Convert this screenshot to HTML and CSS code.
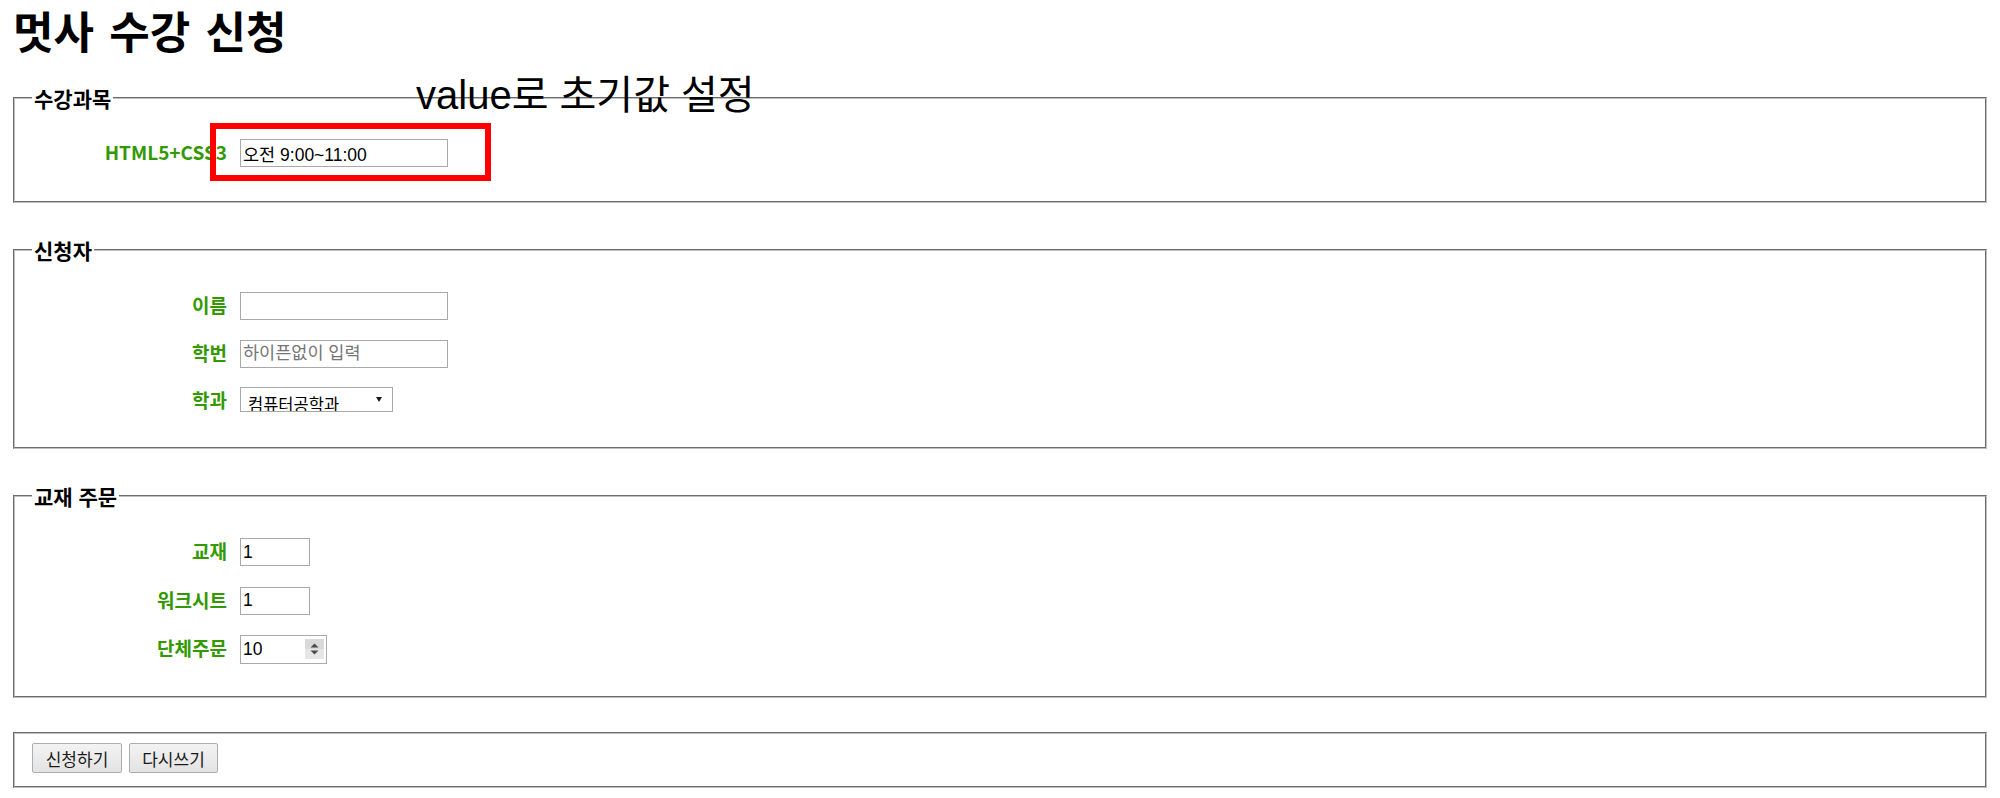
FILE: index.html
```html
<!DOCTYPE html>
<html lang="ko">
<head>
<meta charset="utf-8">
<title>멋사 수강 신청</title>
<link rel="stylesheet" href="styles.css">
</head>
<body>
<h1 class="title">멋사 수강 신청</h1>
<form class="apply">
  <fieldset class="group group-course">
    <legend class="group-legend">수강과목</legend>
    <div class="row">
      <label class="row-label" for="course">HTML5+CSS3</label>
      <input class="field field-wide" id="course" type="text" value="오전 9:00~11:00">
    </div>
  </fieldset>

  <fieldset class="group group-person">
    <legend class="group-legend">신청자</legend>
    <div class="row">
      <label class="row-label" for="name">이름</label>
      <input class="field field-wide" id="name" type="text">
    </div>
    <div class="row">
      <label class="row-label" for="sid">학번</label>
      <input class="field field-wide" id="sid" type="text" placeholder="하이픈없이 입력">
    </div>
    <div class="row">
      <label class="row-label" for="major">학과</label>
      <span class="select-wrap">
        <select class="select" id="major">
          <option>컴퓨터공학과</option>
          <option>정보통신학과</option>
          <option>전자공학과</option>
        </select>
      </span>
    </div>
  </fieldset>

  <fieldset class="group group-book">
    <legend class="group-legend">교재 주문</legend>
    <div class="row">
      <label class="row-label" for="book">교재</label>
      <input class="field field-num" id="book" type="number" value="1">
    </div>
    <div class="row">
      <label class="row-label" for="sheet">워크시트</label>
      <input class="field field-num" id="sheet" type="number" value="1">
    </div>
    <div class="row">
      <label class="row-label" for="group">단체주문</label>
      <span class="spin-wrap">
        <input class="field field-spin" id="group" type="number" value="10">
        <span class="spin" aria-hidden="true">
          <svg width="19" height="20" viewBox="0 0 19 20">
            <rect x="0" y="0" width="19" height="20" fill="#e6e6e6"/>
            <rect x="0" y="0" width="19" height="10" fill="#d9d9d9"/>
            <path d="M5.5 8.5 L9.5 4.5 L13.5 8.5 Z" fill="#4a4a4a"/>
            <path d="M5.5 11.5 L9.5 15.5 L13.5 11.5 Z" fill="#4a4a4a"/>
          </svg>
        </span>
      </span>
    </div>
  </fieldset>

  <fieldset class="group group-actions">
    <input class="btn" type="submit" value="신청하기">
    <input class="btn" type="reset" value="다시쓰기">
  </fieldset>
</form>

<div class="callout-box"></div>
<p class="callout-text">value로 초기값 설정</p>
</body>
</html>
```

FILE: styles.css
```css
html, body {
  margin: 0;
  background: #ffffff;
}

body {
  position: relative;
  padding-top: 6px;
  font-family: "Noto Sans CJK KR", sans-serif;
  color: #000000;
}

.title {
  margin: 0 0 31px 13px;
  font-size: 44px;
  line-height: 48px;
  font-weight: 700;
  word-spacing: 3px;
}

.apply {
  margin: 0;
}

.group {
  margin: 0 13px;
  border: 2px groove #c0c0c0;
  padding: 0 17px;
  min-width: 0;
}

.group + .group {
  margin-top: 34px;
}

.group-legend {
  padding: 0 2px;
  font-size: 21px;
  line-height: 26px;
  font-weight: 700;
  font-family: "Noto Sans CJK KR", sans-serif;
}

.group-course {
  padding-top: 28px;
  padding-bottom: 34px;
}

.group-person {
  padding-top: 29px;
  padding-bottom: 34px;
}

.group-person .row + .row {
  margin-top: 19.5px;
}

.group-book {
  padding-top: 29px;
  padding-bottom: 32px;
}

.group-book .row + .row {
  margin-top: 20.5px;
}

.group-actions {
  padding-top: 9px;
  padding-bottom: 13px;
  display: flex;
  gap: 7px;
}

.row {
  display: flex;
  align-items: flex-start;
}

.row-label {
  width: 195px;
  flex: none;
  text-align: right;
  margin-right: 13px;
  font-family: "Noto Sans CJK KR", sans-serif;
  font-size: 19px;
  line-height: 26px;
  font-weight: 700;
  color: #339900;
}

.field {
  box-sizing: border-box;
  height: 28px;
  margin: 0;
  border: 1px solid #a9a9a9;
  border-radius: 0;
  padding: 0 2px;
  background: #ffffff;
  font-family: "Liberation Sans", "Noto Sans CJK KR", sans-serif;
  font-size: 17.5px;
  color: #000000;
  outline: none;
}

.field::placeholder {
  color: #757575;
}

.field-wide {
  width: 208px;
}

.field-num {
  width: 70px;
  -moz-appearance: textfield;
  appearance: textfield;
}

.field-spin {
  width: 87px;
  height: 29px;
  -moz-appearance: textfield;
  appearance: textfield;
}

.field::-webkit-inner-spin-button,
.field::-webkit-outer-spin-button {
  -webkit-appearance: none;
  margin: 0;
}

.spin-wrap {
  position: relative;
  display: inline-block;
  line-height: 0;
}

.spin {
  position: absolute;
  right: 3px;
  top: 4px;
  width: 19px;
  height: 20px;
}

.select-wrap {
  position: relative;
  display: inline-block;
  line-height: 0;
}

.select {
  -webkit-appearance: none;
  appearance: none;
  box-sizing: border-box;
  width: 153px;
  height: 25px;
  margin: 0;
  border: 1px solid #a9a9a9;
  border-radius: 0;
  padding: 5px 0 0 7px;
  background: #ffffff;
  font-family: "Noto Sans CJK KR", sans-serif;
  font-size: 16.5px;
  line-height: 22px;
  color: #000000;
}

.select-wrap::after {
  content: "";
  position: absolute;
  right: 11px;
  top: 10px;
  border-left: 3px solid transparent;
  border-right: 3px solid transparent;
  border-top: 5px solid #1a1a1a;
}

.btn {
  box-sizing: border-box;
  width: 90px;
  height: 30px;
  margin: 0;
  padding: 0;
  border: 1px solid #adadad;
  border-radius: 2px;
  background: linear-gradient(#f3f3f3, #e3e3e3);
  font-family: "Noto Sans CJK KR", sans-serif;
  font-size: 17px;
  color: #1a1a1a;
}

.btn + .btn {
  width: 89px;
}

.callout-box {
  position: absolute;
  left: 210px;
  top: 123px;
  box-sizing: border-box;
  width: 281px;
  height: 58px;
  border: 6px solid #ff0000;
}

.callout-text {
  position: absolute;
  left: 416px;
  top: 75px;
  margin: 0;
  font-family: "Liberation Sans", "Noto Sans CJK KR", sans-serif;
  font-size: 40px;
  line-height: 40px;
  font-weight: 400;
  color: #000000;
  white-space: nowrap;
}
```
